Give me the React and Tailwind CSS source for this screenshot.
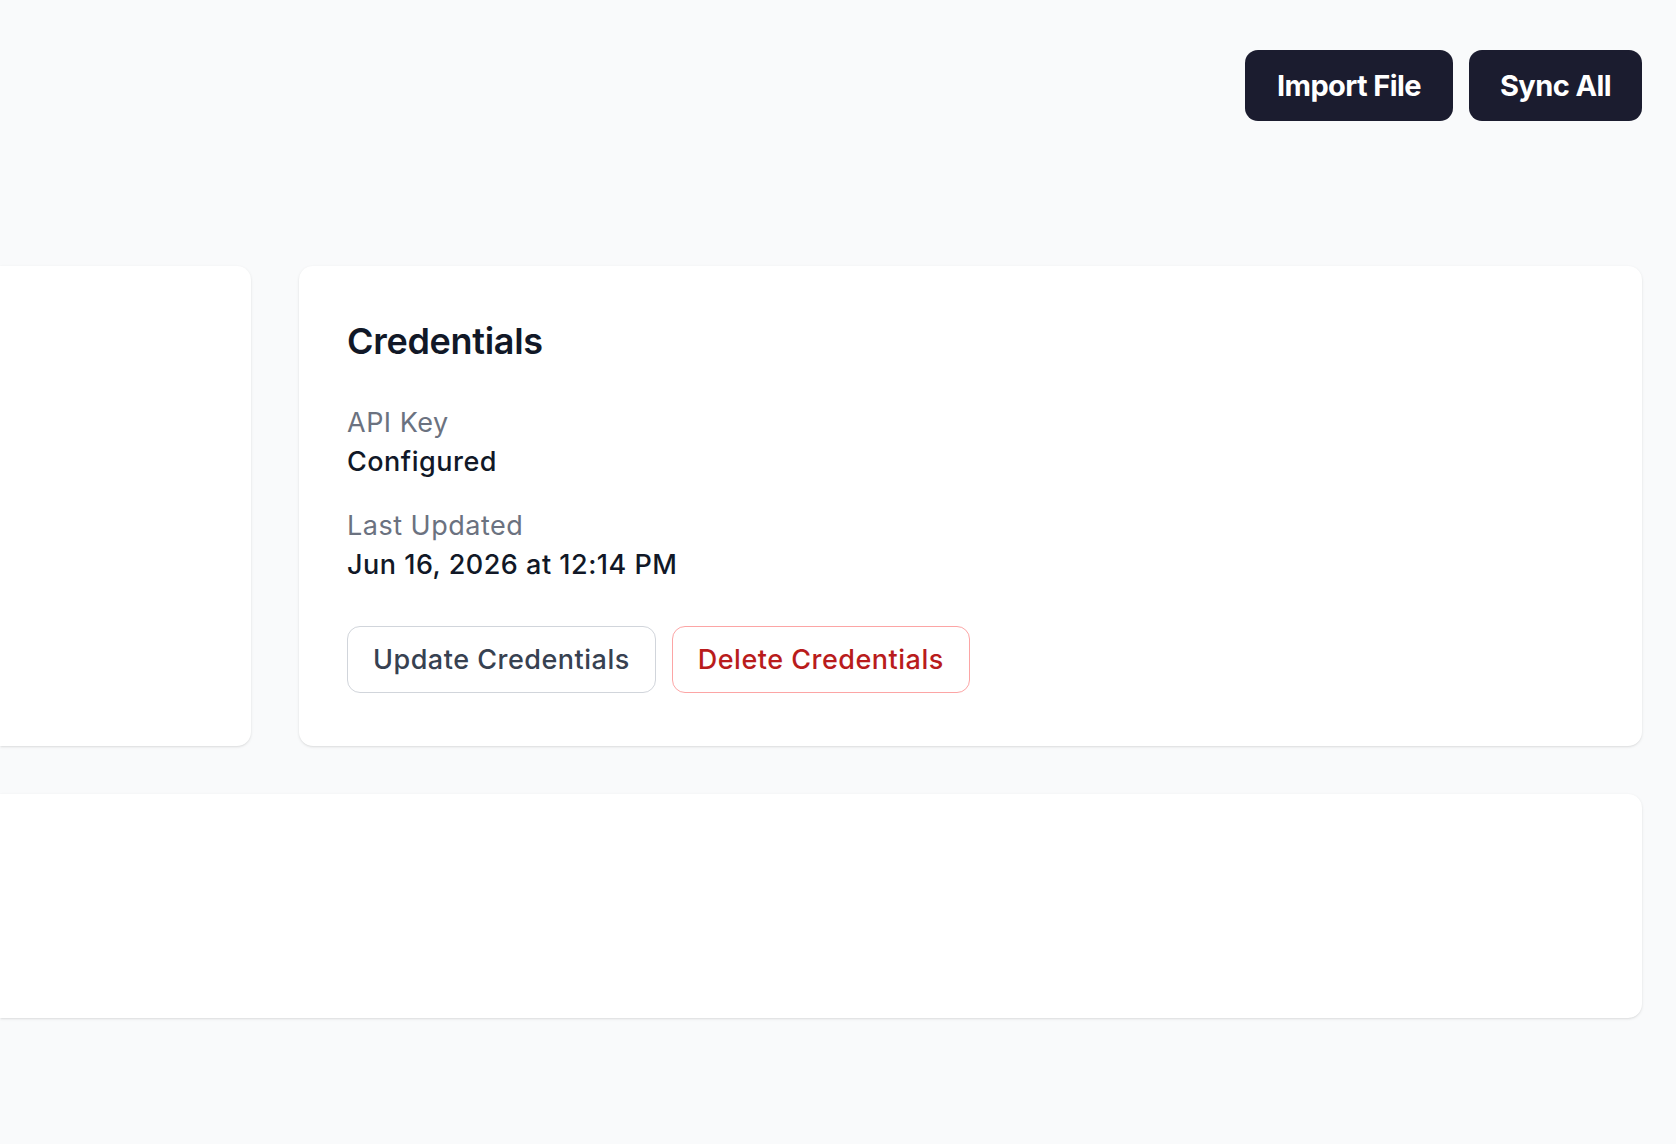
import React from "react";

export default function App() {
  return (
    <div
      className="min-h-[1144px] w-full overflow-hidden bg-[#f9fafb]"
      style={{ fontFamily: "Inter, 'Noto Sans', sans-serif" }}
    >
      <div className="flex justify-end gap-4 pr-[34px] pt-[50px]">
        <button className="rounded-[13px] bg-[#1b1c2f] px-[32px] py-[13px] text-[29px] font-bold leading-[45px] tracking-[-0.6px] text-white">
          Import File
        </button>
        <button className="rounded-[13px] bg-[#1b1c2f] px-[31px] py-[13px] text-[29px] font-bold leading-[45px] tracking-[-0.6px] text-white">
          Sync All
        </button>
      </div>

      <div className="mt-[145px] grid grid-cols-[251px_1fr] gap-[48px] pr-[34px]">
        <div className="h-[480px] rounded-r-[14px] bg-white shadow-sm" />
        <div className="rounded-[14px] bg-white px-[48px] pt-[48px] shadow-sm">
          <h2 className="text-[36px] font-semibold leading-[54px] tracking-[-0.3px] text-[#111827]">
            Credentials
          </h2>
          <div className="mt-[35px]">
            <div className="text-[27px] leading-[39px] tracking-[0.5px] text-[#6b7280]">API Key</div>
            <div className="text-[27px] font-medium leading-[39px] tracking-[0.5px] text-[#111827]">
              Configured
            </div>
          </div>
          <div className="mt-[25px]">
            <div className="text-[27px] leading-[39px] tracking-[0.5px] text-[#6b7280]">Last Updated</div>
            <div className="text-[27px] font-medium leading-[39px] tracking-[0.5px] text-[#111827]">
              Jun 16, 2026 at 12:14 PM
            </div>
          </div>
          <div className="mt-[42px] flex gap-4">
            <button className="rounded-[13px] border border-[#d1d5db] bg-white px-[25px] py-[13px] text-[27px] font-medium leading-[39px] tracking-[0.5px] text-[#374151]">
              Update Credentials
            </button>
            <button className="rounded-[13px] border border-[#fca5a5] bg-white px-[25px] py-[13px] text-[27px] font-medium leading-[39px] tracking-[0.5px] text-[#b91c1c]">
              Delete Credentials
            </button>
          </div>
        </div>
      </div>

      <div className="mr-[34px] mt-[48px] h-[224px] rounded-r-[14px] bg-white shadow-sm" />
    </div>
  );
}
